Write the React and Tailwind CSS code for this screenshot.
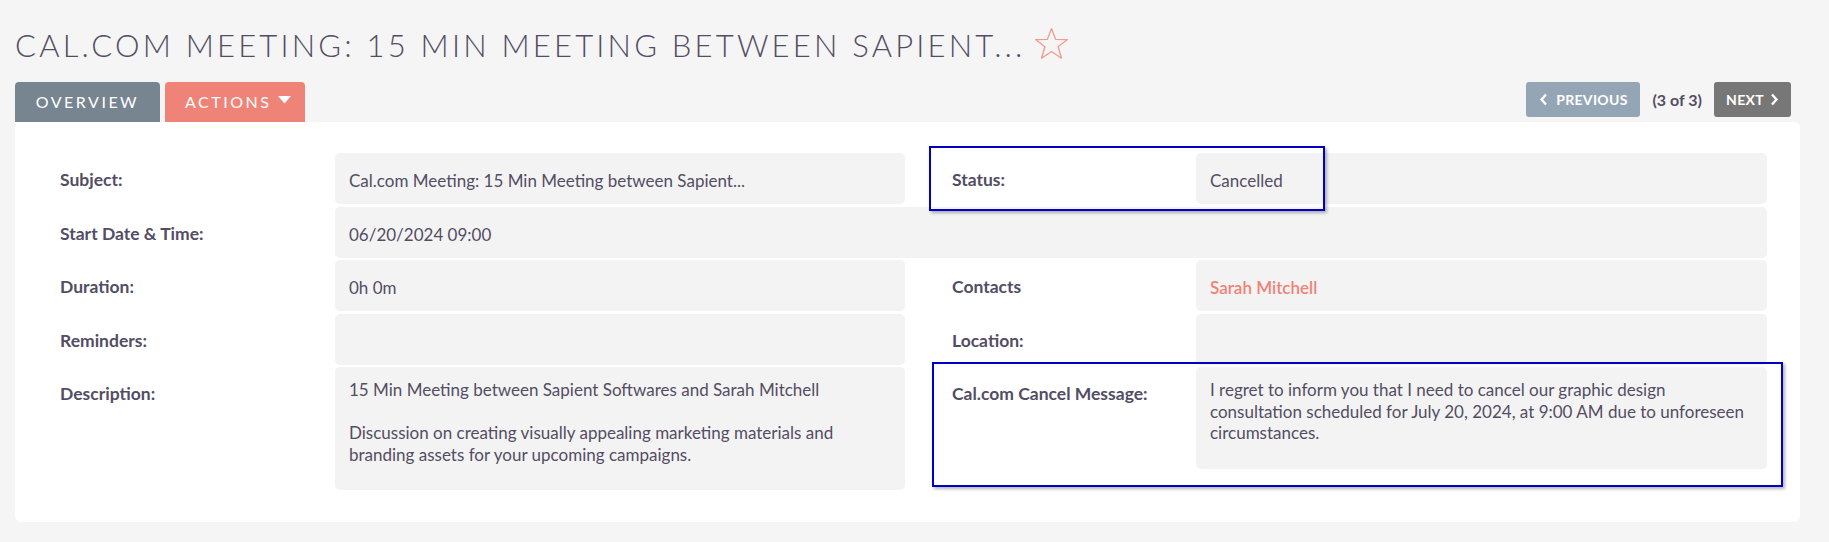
import React from 'react';

const labelCls = "font-bold text-[17.5px] leading-[24px] pl-[15px] pt-[15px]";
const cellCls = "bg-[#f3f3f3] rounded-[5px] px-[14px] pt-[16px] text-[17px] leading-[24px]";

const Star = () => (
  <svg width="35" height="33" viewBox="0 0 34 32" className="ml-[8px] mt-[-4px]">
    <polygon
      points="17,1.5 21,12 32.5,12.2 23.4,19.2 26.7,30.3 17,23.8 7.3,30.3 10.6,19.2 1.5,12.2 13,12"
      fill="none"
      stroke="#f39a93"
      strokeWidth="1.3"
      strokeLinejoin="round"
    />
  </svg>
);

const Chevron = ({ dir }) => (
  <svg width="9" height="13" viewBox="0 0 9 13">
    <polyline
      points={dir === 'left' ? '7,1.5 2.5,6.5 7,11.5' : '2,1.5 6.5,6.5 2,11.5'}
      fill="none"
      stroke="#ffffff"
      strokeWidth="2.4"
    />
  </svg>
);

const App = () => {
  return (
    <div className="relative min-h-[542px] bg-[#f5f5f5] font-['Lato','Liberation_Sans',sans-serif] text-[#534d64]">
      {/* Title */}
      <div className="flex items-center pt-[26px] pl-[15px]">
        <h1 className="font-light text-[31px] leading-[38px] tracking-[3.2px] uppercase">
          Cal.com Meeting: 15 Min Meeting between Sapient...
        </h1>
        <Star />
      </div>

      {/* Tabs + pager */}
      <div className="flex items-start mt-[18px] pl-[15px] pr-[38px]">
        <div className="flex gap-[5px]">
          <div className="w-[145px] h-[40px] bg-[#778591] rounded-t-[4px] flex items-center justify-center text-white text-[16px] tracking-[2.5px] uppercase">
            Overview
          </div>
          <div className="w-[140px] h-[40px] bg-[#f08377] rounded-t-[4px] flex items-center pl-[20px] text-white text-[16px] tracking-[2.5px] uppercase">
            Actions
            <svg width="13" height="8" viewBox="0 0 13 8" className="ml-[7px] mb-[4px]">
              <polygon points="0,0 13,0 6.5,7.5" fill="#ffffff" />
            </svg>
          </div>
        </div>
        <div className="ml-auto flex items-center gap-[12px]">
          <div className="w-[114px] h-[35px] bg-[#94a6b5] rounded-[3px] flex items-center justify-center gap-[8px] text-white font-bold text-[14px] tracking-[0.3px]">
            <Chevron dir="left" />
            PREVIOUS
          </div>
          <span className="font-bold text-[16px]">(3 of 3)</span>
          <div className="w-[77px] h-[35px] bg-[#777777] rounded-[3px] flex items-center justify-center gap-[6px] text-white font-bold text-[14px] tracking-[0.3px]">
            NEXT
            <Chevron dir="right" />
          </div>
        </div>
      </div>

      {/* Detail panel */}
      <div className="ml-[15px] w-[1785px] h-[400px] bg-white rounded-[6px] rounded-tl-none pt-[31px] pl-[30px]">
        <div className="flex flex-col gap-[2.5px]">
          <div className="flex items-start">
            <div className={`w-[290px] ${labelCls}`}>Subject:</div>
            <div className={`w-[570px] h-[51px] ${cellCls}`}>Cal.com Meeting: 15 Min Meeting between Sapient...</div>
            <div className="w-[32px]" />
            <div className={`w-[259px] ${labelCls}`}>Status:</div>
            <div className={`w-[571px] h-[51px] ${cellCls}`}>Cancelled</div>
          </div>

          <div className="flex items-start">
            <div className={`w-[290px] ${labelCls}`}>Start Date &amp; Time:</div>
            <div className={`w-[1432px] h-[51px] ${cellCls}`}>06/20/2024 09:00</div>
          </div>

          <div className="flex items-start">
            <div className={`w-[290px] ${labelCls}`}>Duration:</div>
            <div className={`w-[570px] h-[51px] ${cellCls}`}>0h 0m</div>
            <div className="w-[32px]" />
            <div className={`w-[259px] ${labelCls}`}>Contacts</div>
            <div className={`w-[571px] h-[51px] ${cellCls} text-[#f08377] font-semibold`}>Sarah Mitchell</div>
          </div>

          <div className="flex items-start">
            <div className={`w-[290px] ${labelCls}`}>Reminders:</div>
            <div className={`w-[570px] h-[51px] ${cellCls}`} />
            <div className="w-[32px]" />
            <div className={`w-[259px] ${labelCls}`}>Location:</div>
            <div className={`w-[571px] h-[51px] ${cellCls}`} />
          </div>

          <div className="flex items-start">
            <div className={`w-[290px] ${labelCls}`}>Description:</div>
            <div className="w-[570px] h-[123px] bg-[#f3f3f3] rounded-[5px] px-[14px] pt-[12px] text-[17px] leading-[21.5px]">
              15 Min Meeting between Sapient Softwares and Sarah Mitchell
              <br />
              <br />
              Discussion on creating visually appealing marketing materials and branding assets for your upcoming campaigns.
            </div>
            <div className="w-[32px]" />
            <div className={`w-[259px] ${labelCls}`}>Cal.com Cancel Message:</div>
            <div className="w-[571px] h-[102px] bg-[#f3f3f3] rounded-[5px] px-[14px] pt-[12px] text-[17px] leading-[21.5px]">
              I regret to inform you that I need to cancel our graphic design consultation scheduled for July 20, 2024, at 9:00 AM due to unforeseen circumstances.
            </div>
          </div>
        </div>
      </div>

      {/* Highlight annotations */}
      <div className="absolute left-[929px] top-[146px] w-[396px] h-[65px] border-2 border-[#0000c4] shadow-[2px_2px_3px_rgba(0,0,0,0.3)]" />
      <div className="absolute left-[932px] top-[362px] w-[851px] h-[125px] border-2 border-[#0000c4] shadow-[2px_2px_3px_rgba(0,0,0,0.3)]" />
    </div>
  );
};

export default App;
